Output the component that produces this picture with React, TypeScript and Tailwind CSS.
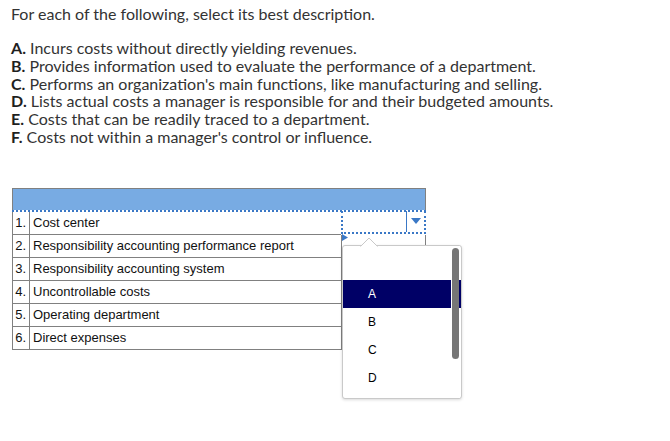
const statements = [
  { key: "A", text: "Incurs costs without directly yielding revenues." },
  { key: "B", text: "Provides information used to evaluate the performance of a department." },
  { key: "C", text: "Performs an organization's main functions, like manufacturing and selling." },
  { key: "D", text: "Lists actual costs a manager is responsible for and their budgeted amounts." },
  { key: "E", text: "Costs that can be readily traced to a department." },
  { key: "F", text: "Costs not within a manager's control or influence." },
];

const terms = [
  "Cost center",
  "Responsibility accounting performance report",
  "Responsibility accounting system",
  "Uncontrollable costs",
  "Operating department",
  "Direct expenses",
];

const options = ["", "A", "B", "C", "D"];

function TermCells({ n, label }: { n: number; label: string }) {
  return (
    <>
      <div className="flex w-[17px] items-center justify-end border-r border-[#808080] pr-[3px]">
        {n}.
      </div>
      <div className="flex flex-1 items-center truncate pl-[3px]">{label}</div>
    </>
  );
}

export default function App() {
  return (
    <div className="relative h-[441px] w-[670px] overflow-hidden bg-white font-['Lato',sans-serif] text-[#333]">
      {/* Prompt */}
      <div className="pl-[11px] pt-[5px] text-[16px]">
        <p className="leading-[18px]">For each of the following, select its best description.</p>
        <div className="mt-[16px] leading-[17.8px]">
          {statements.map((s) => (
            <div key={s.key}>
              <span className="font-bold text-[#1f1f1f]">{s.key}.</span> {s.text}
            </div>
          ))}
        </div>
      </div>

      {/* Matching table */}
      <div className="relative ml-[12px] mt-[42px] w-[414px] font-['Liberation_Sans',Arial,sans-serif] text-[13px] text-[#111]">
        <div className="h-[22px] border-x border-t border-[#808080] bg-[#78abe3]" />
        <div className="border-t-2 border-dotted border-[#3a78c6]" />

        {terms.map((t, i) => (
          <div key={t} className="flex h-[23px]">
            {i === 0 ? (
              <>
                <div className="flex w-[329px] border-b border-l border-[#808080]">
                  <TermCells n={i + 1} label={t} />
                </div>
                <div className="flex w-[85px] -translate-y-[1px] border-x-2 border-b-2 border-dotted border-[#3a78c6]">
                  <div className="flex-1" />
                  <div className="flex w-[18px] items-center justify-center border-l border-[#3a78c6]">
                    <svg width="10" height="6" viewBox="0 0 10 6">
                      <path d="M0 0 H10 L5 6 Z" fill="#3a78c6" />
                    </svg>
                  </div>
                </div>
              </>
            ) : (
              <>
                <div className="flex w-[330px] border-x border-b border-[#808080]">
                  <TermCells n={i + 1} label={t} />
                </div>
                <div className="w-[84px] border-r border-b border-[#808080]" />
              </>
            )}
          </div>
        ))}

        {/* focus marker for row 2 */}
        <svg className="absolute left-[330px] top-[46px]" width="6" height="7" viewBox="0 0 6 7">
          <path d="M0 0 L6 3.5 L0 7 Z" fill="#3a78c6" />
        </svg>

        {/* Dropdown caret */}
        <svg className="absolute left-[348px] top-[49px] z-20" width="18" height="10" viewBox="0 0 18 10">
          <path d="M0.5 9.5 L9 1 L17.5 9.5" fill="white" stroke="#c9c9c9" />
          <path d="M1.5 10 L9 2.5 L16.5 10 Z" fill="white" />
        </svg>

        {/* Dropdown list */}
        <div className="absolute left-[330px] top-[57px] z-10 h-[154px] w-[120px] rounded-[3px] border border-[#c9c9c9] bg-white pt-[6px] shadow-[0_1px_3px_rgba(0,0,0,0.15)]">
          {options.map((o) => (
            <div
              key={o || "blank"}
              className={`flex h-[28px] items-center pl-[25px] font-['Liberation_Sans',Arial,sans-serif] text-[12px] ${
                o === "A" ? "bg-[#000066] text-white" : "text-black"
              }`}
            >
              {o}
            </div>
          ))}
          <div className="absolute bottom-0 right-[1px] top-0 w-[9px] bg-white">
            <div className="absolute left-[1px] top-[2px] h-[111px] w-[7px] rounded-full bg-[#767676]" />
          </div>
          <div className="absolute right-0 top-[34px] h-[28px] w-[2px] bg-[#000066]" />
        </div>
      </div>
    </div>
  );
}
